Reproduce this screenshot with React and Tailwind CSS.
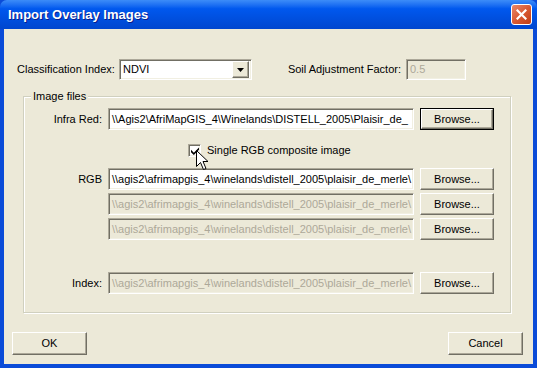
import React from 'react';

const sunken = 'border border-t-[#ACA899] border-l-[#ACA899] border-b-white border-r-white shadow-[inset_1px_1px_0_#716F64,inset_-1px_-1px_0_#F1EFE2]';
const raised = 'border border-t-white border-l-white border-b-[#716F64] border-r-[#716F64] shadow-[inset_-1px_-1px_0_#ACA899]';

const Button = ({ children, className = '', isDefault = false }) => (
    <button
        type="button"
        className={
            isDefault
                ? `border border-black bg-[#ECE9D8] ${className}`
                : `${raised} bg-[#ECE9D8] text-black ${className}`
        }
    >
        {isDefault ? (
            <span className={`${raised} flex h-full w-full items-center justify-center`}>{children}</span>
        ) : (
            children
        )}
    </button>
);

const PathInput = ({ value, disabled = false }) => (
    <div
        className={`${sunken} h-[22px] w-[306px] overflow-hidden whitespace-nowrap pl-[3px] leading-[20px] ${
            disabled ? 'bg-[#ECE9D8] text-[#ACA899]' : 'bg-white text-black'
        }`}
    >
        {value}
    </div>
);

const FileRow = ({ label, value, disabled, isDefault, className = '' }) => (
    <div className={`flex h-[22px] items-center ${className}`}>
        <div className="w-[78px] text-right">{label}</div>
        <div className="ml-[6px]">
            <PathInput value={value} disabled={disabled} />
        </div>
        <Button isDefault={isDefault} className="ml-[6px] h-[22px] w-[74px]">Browse...</Button>
    </div>
);

const Cursor = () => (
    <svg width="13" height="21" viewBox="0 0 13 21" className="absolute left-[196px] top-[150px]">
        <path
            d="M0.5 0.5 L0.5 16.5 L4.5 12.5 L7.5 19.5 L10 18.5 L7 11.5 L12 11.5 Z"
            fill="white"
            stroke="black"
            strokeWidth="1"
            strokeLinejoin="miter"
        />
    </svg>
);

const App = () => {
    const rgbPath = '\\\\agis2\\afrimapgis_4\\winelands\\distell_2005\\plaisir_de_merle\\';
    return (
        <div className="relative flex h-[368px] w-[537px] flex-col overflow-hidden bg-[#0A4BD8] font-['Liberation_Sans',Arial,sans-serif] text-[11px] text-black">
            {/* title bar */}
            <div className="flex h-[29px] items-center justify-between rounded-t-[7px] bg-gradient-to-b from-[#3C8CF8] via-[#0058EE] via-30% to-[#0046CF] pl-[8px] pr-[5px]">
                <span className="text-[13px] font-bold text-white [text-shadow:1px_1px_0_#0A1E8C]">
                    Import Overlay Images
                </span>
                <div className="flex h-[21px] w-[21px] items-center justify-center rounded-[3px] border border-white bg-gradient-to-br from-[#E8876A] via-[#D95A33] to-[#C23D12]">
                    <svg width="11" height="11" viewBox="0 0 11 11">
                        <path d="M1.5 1.5 L9.5 9.5 M9.5 1.5 L1.5 9.5" stroke="white" strokeWidth="2.2" strokeLinecap="square" />
                    </svg>
                </div>
            </div>

            {/* client area */}
            <div className="mx-[4px] mb-[4px] flex flex-1 flex-col bg-[#ECE9D8]">
                <div className="mt-[30px] flex h-[21px] items-center pl-[13px]">
                    <div className="w-[102px]">Classification Index:</div>
                    <div className={`${sunken} flex h-[21px] w-[133px] items-center justify-between bg-white pl-[3px] pr-[2px]`}>
                        <span>NDVI</span>
                        <div className={`${raised} flex h-[17px] w-[17px] items-center justify-center bg-[#ECE9D8]`}>
                            <svg width="7" height="4" viewBox="0 0 7 4">
                                <path d="M0 0 H7 L3.5 4 Z" fill="black" />
                            </svg>
                        </div>
                    </div>
                    <div className="w-[149px] text-right">Soil Adjustment Factor:</div>
                    <div className={`${sunken} ml-[5px] h-[21px] w-[60px] bg-[#ECE9D8] pl-[3px] leading-[19px] text-[#ACA899]`}>
                        0.5
                    </div>
                </div>

                <div className="relative ml-[19px] mt-[16px] flex h-[217px] w-[488px] flex-col border border-[#D0D0BF] pt-[11px] shadow-[inset_1px_1px_0_white,1px_1px_0_white]">
                    <span className="absolute left-[7px] top-[-8px] bg-[#ECE9D8] px-[2px] leading-[14px]">Image files</span>

                    <FileRow
                        label="Infra Red:"
                        value="\\Agis2\AfriMapGIS_4\Winelands\DISTELL_2005\Plaisir_de_"
                        isDefault
                    />

                    <div className="mt-[14px] flex h-[13px] items-center pl-[164px]">
                        <div className={`${sunken} flex h-[13px] w-[13px] items-center justify-center bg-white`}>
                            <svg width="8" height="8" viewBox="0 0 7 7">
                                <path d="M0 2.5 L2.5 5 L7 0.5 V2.5 L2.5 7 L0 4.5 Z" fill="black" />
                            </svg>
                        </div>
                        <span className="ml-[6px]">Single RGB composite image</span>
                    </div>

                    <FileRow label="RGB" value={rgbPath} className="mt-[11px]" />
                    <FileRow label="" value={rgbPath} disabled className="mt-[3px]" />
                    <FileRow label="" value={rgbPath} disabled className="mt-[3px]" />
                    <FileRow label="Index:" value={rgbPath} disabled className="mt-[32px]" />
                </div>

                <div className="mt-[19px] flex justify-between pl-[8px] pr-[10px]">
                    <Button className="h-[23px] w-[75px]">OK</Button>
                    <Button className="h-[23px] w-[75px]">Cancel</Button>
                </div>
            </div>

            <Cursor />
        </div>
    );
};

export default App;
